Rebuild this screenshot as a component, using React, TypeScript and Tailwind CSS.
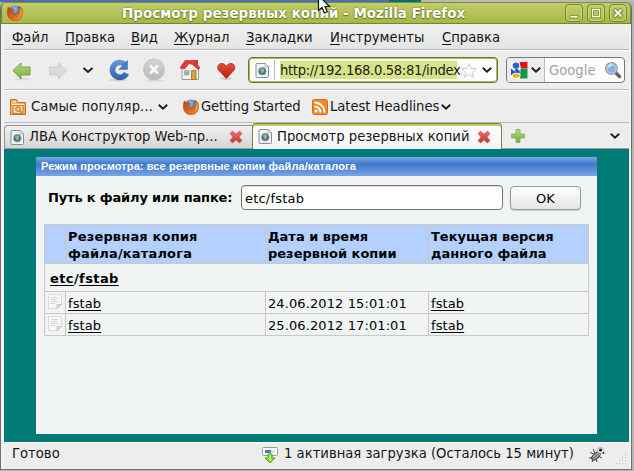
import React from "react";

const UI = "font-['DejaVu_Sans',Verdana,sans-serif]";

function Firefox({ size = 16 }: { size?: number }) {
  return (
    <svg width={size} height={size} viewBox="0 0 16 16" className="shrink-0">
      <defs>
        <radialGradient id="globe" cx="45%" cy="25%" r="60%">
          <stop offset="0" stopColor="#8fc4ee" />
          <stop offset="1" stopColor="#274f9a" />
        </radialGradient>
        <linearGradient id="fox" x1="0" y1="0" x2="1" y2="1">
          <stop offset="0" stopColor="#b8420e" />
          <stop offset=".55" stopColor="#e0661a" />
          <stop offset="1" stopColor="#f0962a" />
        </linearGradient>
      </defs>
      <circle cx="8" cy="7.700" r="7.200" fill="url(#globe)" />
      <path d="M1.300 1.800 3 3.800 5 3.600 7.200 4.400 6.600 6.100 5.300 7 6 8.600l2.200 1 2.600-1.200 1.200-2.400-1-3.200C13.600 4 12.600 1.800 11.600 1 15 2.500 16 5.400 15.800 8.300 15.500 12.800 12.200 15.900 8 15.900 3.600 15.900.4 12.500.3 8 .2 5.600.5 3.700 1.300 1.800Z" fill="url(#fox)" stroke="#a9400f" strokeWidth=".4" />
      <path d="M13.300 3.200c2.600 4.200.5 9.800-4.600 10.800 3.700-.5 6-4.500 4.600-10.800Z" fill="#ffd75a" />
    </svg>
  );
}

function Chevron({ className = "" }: { className?: string }) {
  return (
    <svg width="10" height="6" viewBox="0 0 10 6" className={"shrink-0 " + className}>
      <path d="M.8.8 5 4.600 9.200.8" fill="none" stroke="#1c1c1c" strokeWidth="1.900" />
    </svg>
  );
}

function PageIcon() {
  return (
    <svg width="15" height="17" viewBox="0 0 15 17" className="shrink-0">
      <path d="M2 1.500h8.500l3 3V14.500a1 1 0 0 1-1 1H2a1 1 0 0 1-1-1v-12a1 1 0 0 1 1-1Z" fill="#f2f2f2" stroke="#8d8d8d" />
      <path d="M10 1.500v3.200h3.500" fill="#fff" stroke="#a5a5a5" strokeWidth=".8" />
      <circle cx="7.300" cy="9.200" r="3.900" fill="#3a6aa5" stroke="#a3b3c4" strokeWidth=".8" />
      <path d="m5 7.500 2-1.300 2 .8.3 2L7.500 11.500 6 10.500Z" fill="#9db85d" />
    </svg>
  );
}

function CloseTab() {
  return (
    <svg width="14" height="14" viewBox="0 0 14 14" className="shrink-0">
      <defs>
        <linearGradient id="red" x1="0" y1="0" x2="0" y2="1">
          <stop stopColor="#e67373" />
          <stop offset="1" stopColor="#c9302f" />
        </linearGradient>
      </defs>
      <path d="m3.500 1 3.500 3L10.500 1 13 3.500 10 7l3 3.500-2.500 2.500L7 10l-3.500 3L1 10.500 4 7 1 3.500Z" fill="url(#red)" stroke="#cc5050" strokeWidth=".6" />
    </svg>
  );
}

function WinButton({ children }: { children: React.ReactNode }) {
  return (
    <div className="h-[18px] w-[18px] rounded-[4px] border border-[#75832e] bg-gradient-to-b from-[#c2cf6b] to-[#abba4a] shadow-[inset_0_0_0_1px_#ccd77e]">
      <svg width="16" height="16" viewBox="0 0 16 16">{children}</svg>
    </div>
  );
}

function TitleBar() {
  return (
    <div className="flex h-[22px] items-start rounded-t-[5px] border-x border-b border-[#7c8931] border-b-[#76842c] bg-gradient-to-b from-[#c3cf6c] to-[#a8b748] pl-[5px] shadow-[inset_0_1px_0_#7e8d3b]">
      <div className="pt-[3px]"><Firefox /></div>
      <div className={UI + " ml-[99px] w-[443px] whitespace-pre text-[13.500px] leading-[22px] font-bold text-white [text-shadow:0_0_2px_#65731e,0_1px_1px_#65731e]"}>
        Просмотр резервных копий - Mozilla Firefox
      </div>
      <div className="flex gap-[4px] pt-[2px]">
        <WinButton><path d="M4 10.500h8V13H4Z" fill="#fbfde8" stroke="#7b8933" strokeWidth=".8" /></WinButton>
        <WinButton><path d="M4.500 4.500h7v7h-7Z" fill="none" stroke="#7b8933" strokeWidth="3" /><path d="M4.500 4.500h7v7h-7Z" fill="none" stroke="#f4f7da" strokeWidth="1.300" /></WinButton>
        <WinButton><path d="m4 4 8 8M12 4l-8 8" stroke="#7b8933" strokeWidth="4" /><path d="m4.500 4.500 7 7m0-7-7 7" stroke="#fbfde8" strokeWidth="2" /></WinButton>
      </div>
    </div>
  );
}

const menu: [string, string][] = [
  ["Файл", "w-[53px]"],
  ["Правка", "w-[66px]"],
  ["Вид", "w-[43px]"],
  ["Журнал", "w-[72px]"],
  ["Закладки", "w-[84px]"],
  ["Инструменты", "w-[112px]"],
  ["Справка", "w-[70px]"],
];

function MenuBar() {
  return (
    <div className={UI + " flex h-[25px] border-b border-[#b9b9b9] bg-gradient-to-b from-[#f0f0f0] to-[#e5e5e5] pl-[8px] text-[13.200px] leading-[26px] text-[#141414]"}>
      {menu.map(([label, width]) => (
        <div key={label} className={width + " whitespace-nowrap"}>
          <span className="underline underline-offset-2">{label[0]}</span>{label.slice(1)}
        </div>
      ))}
    </div>
  );
}

function ToolBar() {
  return (
    <div className={UI + " flex h-[40px] items-center border-t border-b border-t-white border-b-[#bdbdbd] bg-[#ededed] text-[13.200px] text-[#222]"}>
      <svg width="244" height="38" viewBox="0 0 244 38" className="shrink-0">
        <defs>
          <linearGradient id="green" x1="0" y1="0" x2="0" y2="1"><stop stopColor="#b2d983" /><stop offset="1" stopColor="#7cae3b" /></linearGradient>
          <linearGradient id="blue" gradientUnits="userSpaceOnUse" x1="0" y1="8" x2="0" y2="29"><stop stopColor="#6c9ddb" /><stop offset="1" stopColor="#2c5fa8" /></linearGradient>
          <linearGradient id="heart" x1="0" y1="0" x2="0" y2="1"><stop stopColor="#e5543e" /><stop offset="1" stopColor="#bd1407" /></linearGradient>
          <linearGradient id="stop" x1="0" y1="0" x2="0" y2="1"><stop stopColor="#d4d4d4" /><stop offset="1" stopColor="#b8b8b8" /></linearGradient>
        </defs>
        <ellipse cx="18" cy="28" rx="8" ry="1.500" fill="#dcdcdc" />
        <path d="m9 19.500 8-7.500v4h9v8h-9v4Z" fill="url(#green)" stroke="#79a246" />
        <path d="m62.500 19.500-8-7.500v4h-9v8h9v4Z" fill="#dadada" stroke="#cdcdcd" />
        <path d="m79.500 17 4.500 4 4.500-4" fill="none" stroke="#222" strokeWidth="2" />
        <ellipse cx="114" cy="29" rx="9" ry="1.500" fill="#d2d2d2" />
        <path d="M122.500 22.200a7.400 7.400 0 1 1-1.700-8.800" fill="none" stroke="url(#blue)" strokeWidth="5.600" />
        <path d="M123.800 8.800v10h-9.600l3.300-3.300Z" fill="#4579c2" />
        <ellipse cx="150" cy="29.500" rx="9" ry="1.300" fill="#dadada" />
        <circle cx="150" cy="18.500" r="10.500" fill="url(#stop)" stroke="#c6c3be" />
        <path d="m146 14.500 8 8m0-8-8 8" stroke="#f8f8f8" strokeWidth="2.600" />
        <path d="M178 16.500l5-5.500h6l5.500 6v11.500H178Z" fill="#f2f2ee" stroke="#9d9d96" />
        <path d="M190.500 9h3.500v5h-3.500Z" fill="#da3432" />
        <path d="m176 17 5-7.500h9.500L196 17l-2 1.500-5.500-5-3.500-1-4.500 5.500Z" fill="#e2393b" stroke="#c3292c" strokeWidth=".6" />
        <path d="M187.500 19.500h4.500V28.500h-4.500Z" fill="#e0a040" stroke="#a26b23" strokeWidth=".8" />
        <path d="M180.500 19.500h4.500v4.500h-4.500Zm2.200 0v4.500m-2.200-2.200h4.500" fill="#a9c8e6" stroke="#7d93a8" strokeWidth=".6" />
        <ellipse cx="222" cy="27.500" rx="6" ry="1.500" fill="#d7cccc" />
        <path d="M222.300 27.500 214.500 19c-2-3 0-6.500 3.200-6.500 2 0 3.700 1.200 4.600 3 .9-1.800 2.600-3 4.600-3 3.200 0 5 3.500 3.200 6.500Z" fill="url(#heart)" stroke="#a92317" strokeWidth=".8" />
      </svg>
      <div className="flex h-[26px] w-[250px] items-center rounded-[4px] border border-[#687534] bg-white pl-[6px] shadow-[inset_0_0_0_1px_#aabd5b]">
        <PageIcon />
        <div className="ml-[4px] h-[20px] w-px bg-[#b6b6b6]" />
        <div className="ml-[5px] h-[18px] w-[177px] bg-[#d7e587] text-[13.200px] leading-[19px] tracking-[-0.350px] whitespace-nowrap">http://192.168.0.58:81/index</div>
        <svg width="18" height="17" viewBox="0 0 18 17" className="ml-[3px] shrink-0"><path d="m9 1.500 2 4.800 5.300.4-4 3.500 1.300 5.100L9 12.500l-4.600 2.800 1.300-5.100-4-3.500 5.300-.4Z" fill="#fff" stroke="#ccc" /></svg>
        <Chevron className="ml-[4px]" />
      </div>
      <div className="ml-[8px] flex h-[26px] w-[119px] items-center overflow-hidden rounded-[4px] border border-[#777] bg-white">
        <div className="flex h-full w-[38px] shrink-0 items-center border-r border-[#bbb] bg-[#ececec] pl-[4px]">
          <svg width="17" height="17" viewBox="0 0 17 17" className="shrink-0">
            <path d="M0 0h16.500v16.500H0Z" fill="#fff" />
            <path d="M8.500 0h8v6.500H10Z" fill="#e8100c" />
            <path d="M9.500 6.500h7v10H9Z" fill="#0b9a46" />
            <path d="M0 6.500 3 9l4 1.500-1 2-6 .5Z" fill="#1959c4" />
            <ellipse cx="5" cy="3.600" rx="3.300" ry="3.200" fill="#2864cb" />
            <path d="M5 6 8.500 8.500 9 11 6.500 11.500 3.500 8.500Z" fill="#2360bd" />
            <ellipse cx="5.200" cy="13.700" rx="4" ry="2.600" fill="#f5b413" stroke="#fff" strokeWidth=".8" />
          </svg>
          <Chevron className="ml-[3px]" />
        </div>
        <span className="ml-[4px] w-[55px] shrink-0 pt-px text-[13.200px] text-[#a2a2a2]">Google</span>
        <svg width="18" height="18" viewBox="0 0 18 18" className="shrink-0"><path d="m11 11 4.500 4.500" stroke="#666" strokeWidth="3.500" strokeLinecap="round" /><circle cx="7.500" cy="7.500" r="5.800" fill="#82b2e4" stroke="#989898" strokeWidth="1.400" /><circle cx="7.500" cy="7.500" r="4.700" fill="none" stroke="#dbe8f5" strokeWidth=".8" /><path d="M4.500 6.500q1-3 4-2" fill="none" stroke="#d9edff" strokeWidth="1.500" /></svg>
      </div>
    </div>
  );
}

function Bookmarks() {
  return (
    <div className={UI + " flex h-[33px] items-center border-t border-b border-t-white border-b-[#b9b9b9] bg-[#ededed] pl-[6px] text-[13.200px] text-[#181818]"}>
      <svg width="16" height="16" viewBox="0 0 16 16" className="shrink-0">
        <path d="M.5 15.500v-15h6l1.500 3h7.500v12Z" fill="#f2b06f" stroke="#cf6e1c" />
        <path d="M3 3h3M2 5.500h12" stroke="#fff1dc" />
        <path d="M3 6.500h10v8H3Z" fill="#f8d6af" stroke="#d67a2c" />
        <circle cx="8" cy="10" r="2.300" fill="#f6c797" stroke="#cf6e1c" />
        <path d="m9.800 11.800 2 2" stroke="#cf6e1c" strokeWidth="1.300" />
      </svg>
      <span className="ml-[5px] w-[127px] tracking-[0.100px] whitespace-nowrap">Самые популяр...</span>
      <Chevron />
      <div className="ml-[15px]"><Firefox /></div>
      <span className="ml-[2px] w-[111px] tracking-[-0.170px] whitespace-nowrap">Getting Started</span>
      <svg width="16" height="16" viewBox="0 0 16 16" className="shrink-0"><rect x=".5" y=".5" width="15" height="15" rx="2" fill="#f08b2c" stroke="#d96b12" /><circle cx="4" cy="12" r="1.600" fill="#fff" /><path d="M2.500 7.500a6 6 0 0 1 6 6M2.500 3.500a10 10 0 0 1 10 10" fill="none" stroke="#fff" strokeWidth="1.800" /></svg>
      <span className="ml-[2px] w-[111px] tracking-[-0.050px] whitespace-nowrap">Latest Headlines</span>
      <Chevron />
    </div>
  );
}

function Tabs() {
  return (
    <div className={UI + " flex h-[26px] border-b border-[#9b9b9b] bg-[#ededed] text-[13.200px] leading-[24px] text-[#161616]"}>
      <div className="mt-[2px] flex w-[248px] items-center rounded-tl-[4px] border-t border-l border-[#919191] bg-gradient-to-b from-[#f1f1f1] to-[#d5d5d5] pl-[5px]">
        <PageIcon />
        <span className="ml-[4px] w-[200px] whitespace-nowrap">ЛВА Конструктор Web-пр...</span>
        <CloseTab />
      </div>
      <div className="-mb-px flex w-[250px] items-center rounded-t-[4px] border-x border-t border-[#7b843f] bg-gradient-to-b from-white to-[#f4f4f4] pl-[5px] shadow-[inset_0_2px_0_#bfce62]">
        <PageIcon />
        <span className="ml-[4px] w-[200px] whitespace-nowrap">Просмотр резервных копий</span>
        <CloseTab />
      </div>
      <svg width="14" height="14" viewBox="0 0 14 14" className="mt-[6px] ml-[9px] shrink-0"><path d="M5 .5h4V5h4.500v4H9v4.500H5V9H.5V5H5Z" fill="url(#green)" stroke="#86aa50" strokeWidth=".8" /></svg>
      <Chevron className="mt-[10px] ml-[85px]" />
    </div>
  );
}

const rows = ["24.06.2012 15:01:01", "25.06.2012 17:01:01"];
const cell = "border-r border-b border-[#c8c8c8] pl-[2px]";

function FileIcon() {
  return (
    <svg width="16" height="18" viewBox="0 0 16 18" className="ml-[2px]"><path d="M1.500 1.500h13v10l-4 4h-9Z" fill="#f7f7f7" stroke="#dadada" /><path d="M4 4.500h7M4 6.500h6M4 8.500h7M4 10.500h4" stroke="#d6d6d6" /><path d="M10 15.500v-4h4.500Z" fill="#ddd" stroke="#bbb" strokeWidth=".7" /></svg>
  );
}

function Content() {
  return (
    <div className="h-[293px] bg-[#007a76] px-[32px] pt-[8px] font-['DejaVu_Sans',Verdana,sans-serif] text-[13px] text-black">
      <div className="h-[277px] w-[561px] bg-[#f0f5f4]">
        <div className="h-[19px] bg-[linear-gradient(#7da7e9,#4079cb_38%,#78a5e8)] pl-[5px] font-['Liberation_Sans',Arial,sans-serif] text-[11px] leading-[19px] font-bold tracking-[0.090px] whitespace-nowrap text-white">
          Режим просмотра: все резервные копии файла/каталога
        </div>
        <div className="flex h-[48px] items-start pt-[9px] pl-[12px]">
          <span className="w-[193px] pt-[4px] leading-[18px] font-bold tracking-[-0.170px] whitespace-nowrap">Путь к файлу или папке:</span>
          <div className="h-[25px] w-[262px] rounded-[4px] border border-[#757575] bg-white pl-[3px] leading-[25px] tracking-[0.200px] shadow-[inset_0_1px_1px_#ddd]">etc/fstab</div>
          <div className="mt-px ml-[7px] h-[24px] w-[71px] rounded-[4px] border border-[#989898] bg-gradient-to-b from-white to-[#e5e5e5] text-center leading-[23px] shadow-[0_1px_1px_#ccc]">OK</div>
        </div>
        <div className="ml-[8px] w-[545px] border-t border-l border-[#c8c8c8]">
          <div className="grid h-[39px] grid-cols-[21px_200px_163px_160px] bg-[#b3d0ff] leading-[17px] font-bold">
            <div className={cell} />
            <div className={cell + " pt-[3px] tracking-[0.170px]"}>Резервная копия<br />файла/каталога</div>
            <div className={cell + " pt-[3px]"}>Дата и время<br />резервной копии</div>
            <div className={cell + " pt-[3px]"}>Текущая версия<br />данного файла</div>
          </div>
          <div className="h-[28px] border-r border-b border-[#c8c8c8] pl-[5px] leading-[29px] font-bold tracking-[0.400px]">
            <span className="underline underline-offset-2">etc</span>/<span className="underline underline-offset-2">fstab</span>
          </div>
          {rows.map((date) => (
            <div key={date} className="grid h-[22px] grid-cols-[21px_200px_163px_160px] grid-rows-[22px] leading-[23px] tracking-[0.100px]">
              <div className="border-r border-b border-[#c8c8c8] pt-px"><FileIcon /></div>
              <div className={cell + " underline underline-offset-2"}>fstab</div>
              <div className={cell}>{date}</div>
              <div className={cell + " underline underline-offset-2"}>fstab</div>
            </div>
          ))}
        </div>
      </div>
    </div>
  );
}

function StatusBar() {
  return (
    <div className={UI + " flex h-[27px] items-center border-t border-white bg-[#ededed] pl-[8px] text-[13.200px] text-[#161616]"}>
      <span className="w-[250px] pb-[4px]">Готово</span>
      <svg width="16" height="17" viewBox="0 0 16 17" className="-mt-[2px] shrink-0"><rect x=".5" y=".5" width="15" height="8" rx="1" fill="#fafafa" stroke="#92a18d" /><path d="M3 3h10v3H3Z" fill="#dce4ef" /><path d="M3 3h6v3H3Z" fill="#487bb8" /><path d="M6 7h4v4h3l-5 5-5-5h3Z" fill="#90df45" stroke="#58a419" /><path d="M8 8v6" stroke="#d6f7a5" /></svg>
      <span className="ml-[6px] w-[304px] pb-[4px] whitespace-nowrap">1 активная загрузка (Осталось 15 минут)</span>
      <svg width="18" height="18" viewBox="0 0 18 18" className="-mt-[3px] shrink-0"><path d="M2 6.500 6 8M5 3l2 4M1 12l5-1M4 16l2-4M9 16l-1-4M14 12l-4-2M10 4l1 3" stroke="#4a4a4a" /><ellipse cx="8" cy="10" rx="5.500" ry="2.800" transform="rotate(-42 8 10)" fill="#777" stroke="#333" strokeWidth=".8" /><path d="m5 11 5-4M6 13l6-5" stroke="#bbb" /><circle cx="12.500" cy="4.500" r="3" fill="#eee" stroke="#888" strokeWidth=".6" /><circle cx="12.500" cy="4" r="1.500" fill="#111" /><circle cx="15.500" cy="7" r="1" fill="#333" /></svg>
      <svg width="12" height="12" viewBox="0 0 12 12" className="mt-[8px] ml-[9px] shrink-0"><path d="M10 1h1M7 4h1m2 0h1M4 7h1m2 0h1m2 0h1M1 10h1m2 0h1m2 0h1m2 0h1" stroke="#b0b0b0" strokeWidth="1.500" /><path d="M10 2h1M7 5h1m2 0h1M4 8h1m2 0h1m2 0h1M1 11h1m2 0h1m2 0h1m2 0h1" stroke="#fff" /></svg>
    </div>
  );
}

export default function App() {
  return (
    <div className="relative h-[471px] w-[634px] overflow-hidden bg-[#b4b4b4]">
      <div className="h-[2px] bg-[linear-gradient(90deg,#496fad_0_389px,#00706e_389px_421px,#b9b9b9_421px)]" />
      <div className="h-[468px] w-[632px] rounded-t-[6px] border-r border-b border-l border-[#6f6f6f] bg-[#f0f0f0]">
        <TitleBar />
        <div className="pt-px pr-[2px] pl-[3px]">
          <div className="w-[625px]">
            <MenuBar />
            <ToolBar />
            <Bookmarks />
            <Tabs />
            <Content />
            <StatusBar />
          </div>
        </div>
      </div>
      <svg width="16" height="16" viewBox="0 0 16 16" className="absolute top-0 left-[317px]"><path d="M1.500-4V10.500L5 7.500l2.500 5.500 2.800-1.200L8 6.500h4.500L1-5Z" fill="#fff" stroke="#111" strokeWidth="1.200" /></svg>
    </div>
  );
}
